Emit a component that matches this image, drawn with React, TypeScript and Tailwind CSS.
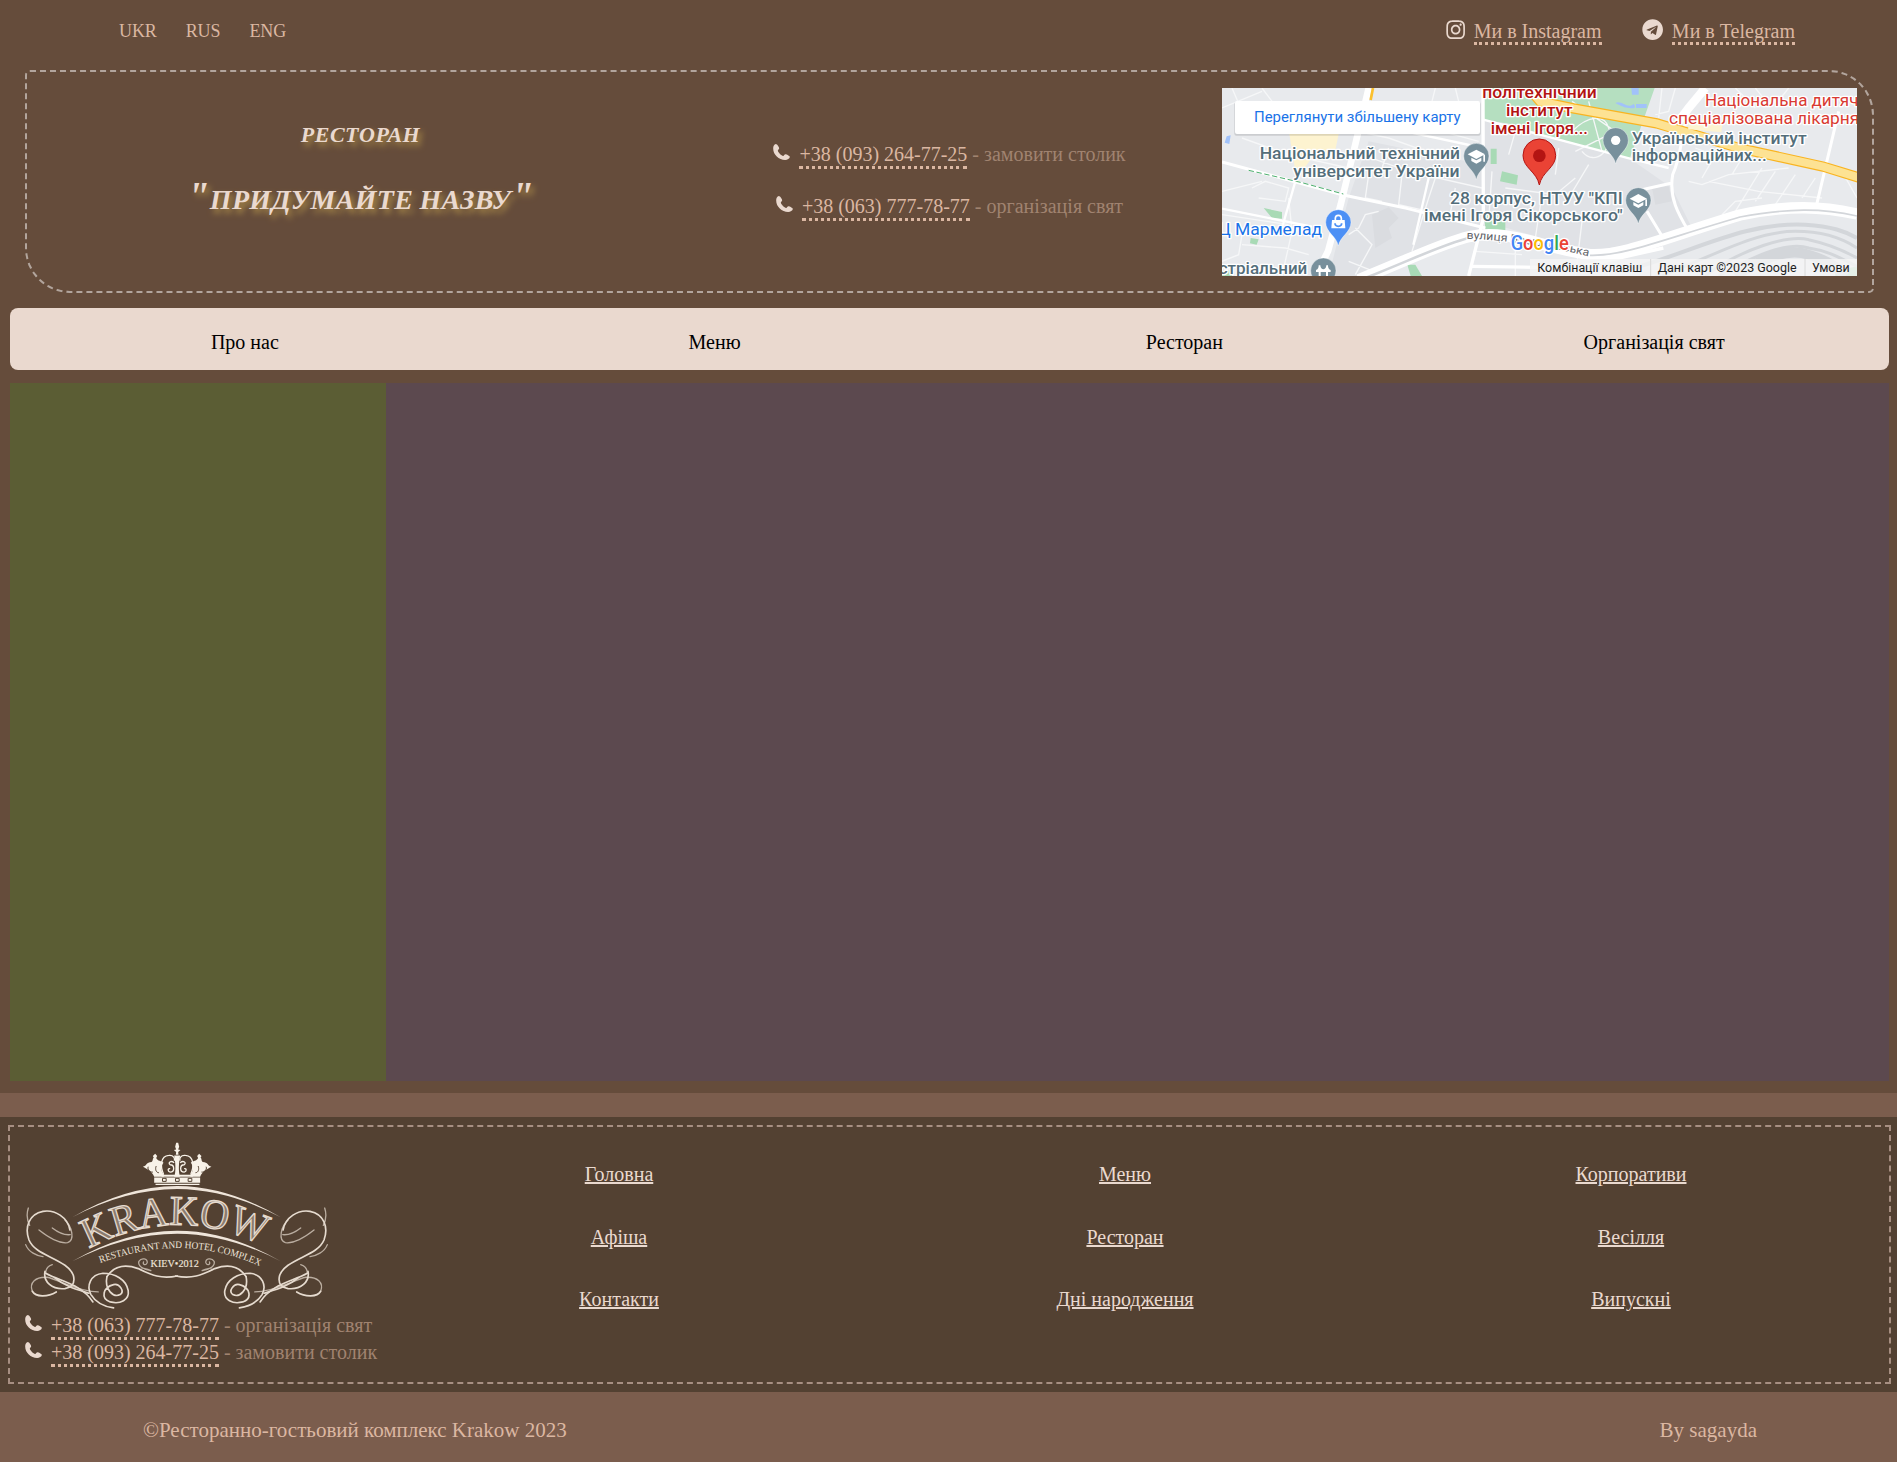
import React from "react";
import { FaInstagram, FaTelegram } from "react-icons/fa";

const serif = "font-['Liberation_Serif',serif]";

function PhoneIcon() {
  return (
    <svg viewBox="0 0 50 48" className="mt-[3px] mr-[9px] h-4 w-[17px] shrink-0 fill-[#ead9cf]">
      <path d="M8 0C3 1 0 6 0 13C0 33 17 48 36 48C43 48 49 44 50 39C50 36 40 31 37 31C34 31 32 36 30 36C25 35 15 25 14 20C14 18 18 16 18 13C18 9 12 0 8 0Z" />
    </svg>
  );
}

function PhoneLine({ number, note }: { number: string; note: string }) {
  return (
    <div className="flex items-start whitespace-nowrap text-xl leading-[27px]">
      <PhoneIcon />
      <span>
        <a className="border-b-3 border-dotted border-[#dbb7a2] pb-px text-[#dbb7a2]">{number}</a>
        <span className="text-[#a08370]"> - {note}</span>
      </span>
    </div>
  );
}

type LabelProps = {
  x: number;
  y: number;
  w?: number;
  end?: boolean;
  color: string;
  weight?: number;
  size?: number;
  halo?: boolean;
  children: React.ReactNode;
};

function Label({ x, y, w, end, color, weight = 500, size = 48, halo = true, children }: LabelProps) {
  return (
    <text
      x={x}
      y={y}
      fill={color}
      fontSize={size}
      fontWeight={weight}
      textAnchor={end ? "end" : "start"}
      textLength={w}
      lengthAdjust="spacingAndGlyphs"
      stroke={halo ? "#ffffff" : "none"}
      strokeWidth={halo ? 8 : 0}
      strokeLinejoin="round"
      paintOrder="stroke"
    >
      {children}
    </text>
  );
}

function Pin({ x, y, color, children }: { x: number; y: number; color: string; children?: React.ReactNode }) {
  return (
    <g transform={`translate(${x} ${y})`}>
      <path d="M0 71C-5 42-38 30-38 0A38 38 0 0 1 38 0C38 30 5 42 0 71Z" fill={color} stroke="#fff" strokeOpacity=".6" strokeWidth="2" />
      {children}
    </g>
  );
}

function Cap() {
  return (
    <g fill="#fff">
      <path d="M-26-5 0-19 26-5 0 9Z" />
      <path d="M-15 5V15L0 23 15 15V5L0 13Z" />
      <path d="M21-3H26V17H21Z" />
    </g>
  );
}

function CityMap() {
  return (
    <svg viewBox="0 0 1905 564" className="block h-[188px] w-[635px] font-[Roboto,sans-serif]">
      <rect width="1905" height="564" fill="#e8eaed" />
      <path d="M440 160 784 230V440L400 564H320L380 330ZM784 90 1224 212 1350 300 1420 440 1100 490 784 400Z" fill="#e0e2e6" />
      <path d="M450 380 500 358 530 390 500 420 510 450 460 480ZM1290 300 1340 295 1350 340 1300 350Z" fill="#dadce0" />
      <path d="M202 138H350L338 196H280L240 250H220Z" fill="#fdf3d0" />
      <path d="M780 0H1298L1224 210 1144 190 954 138 880 110 782 95Z" fill="#b5dfc0" />
      <path d="M806 182H824V228H806ZM840 250 888 262 884 290 834 280ZM786 370 850 385 850 430 790 425ZM125 360 180 372 180 392 150 390ZM86 450 110 454 104 470 84 466ZM556 530H580L600 564H566ZM0 550 30 545V564H0ZM1840 550 1905 535V564H1840Z" fill="#a8dab5" />
      <path d="M1180 45C1200 35 1215 65 1235 48C1245 60 1235 62 1222 60C1205 60 1190 50 1180 45ZM1228 0H1250V20H1230ZM1242 48H1274V60H1242ZM14 145 26 142 22 168 8 164Z" fill="#a1c2fa" />
      <g fill="none" stroke="#f6f7f8" strokeWidth="4">
        <path d="M0 60 120 10M30 0 60 70 130 60M120 0 150 40 250 100M60 150 200 200 380 240M200 330 210 430 180 564M90 300 130 280 200 300 190 340 110 330M0 310 120 280M0 380 200 410M60 470 190 480 260 500M60 440 50 500 0 520M360 120 500 150 640 200M420 200 560 250 780 300M440 260 430 330 480 340M380 440 410 420 430 380 470 370M540 260 530 350 620 370M570 490 620 330 640 270M660 130 770 160M640 0 630 40M700 0 710 40M380 520 480 560M400 560 450 470 400 420M700 300 680 400M500 180 480 240M810 250 800 400M850 300 1000 320 1060 270M880 130 860 200M960 320 940 450M1010 180 1000 260M1100 230 1040 330M1080 400 1060 564M760 490 900 500M880 460V564M1160 564 1150 500M1050 130C1100 80 1150 80 1160 120C1180 180 1120 240 1080 190M1050 40 1180 130 1060 190M1100 40 1140 190M1320 0 1310 90M1360 0 1340 70 1300 80M1400 280 1440 290 1520 260 1700 240M1460 280 1610 310 1800 330M1480 200 1440 270M1560 210 1530 260M1620 240 1540 370M1660 250 1600 340M1720 260 1660 350M1780 270 1740 330M1500 380 1540 340 1620 330M1540 0 1600 60M1600 0 1640 50M1700 0 1660 50M1860 250 1905 330M1420 180 1500 210M1560 170 1600 190" />
      </g>
      <g fill="none" stroke="#fff" strokeLinejoin="round">
        <path d="M0 222 144 261 364 321 554 361 790 420" strokeWidth="9" />
        <path d="M0 362 90 380 270 416" strokeWidth="7" />
        <path d="M220 280 180 420" strokeWidth="7" />
        <path d="M372 118 550 130 784 180M620 270 574 470" strokeWidth="7" />
        <path d="M783 0 784 390 740 564" strokeWidth="10" />
        <path d="M784 95 954 140 1224 212 1340 240" strokeWidth="7" />
        <path d="M1440 0C1370 90 1390 180 1352 260C1340 330 1370 380 1400 430M1240 310 1350 285M1275 370 1324 451M1850 70 1784 350" strokeWidth="9" />
        <path d="M1450 0 1400 60 1370 100" strokeWidth="26" />
        <path d="M440 0 395 190 356 350 318 490 280 564" strokeWidth="20" />
        <path d="M410 575C560 515 660 465 740 446C860 420 960 480 1104 500C1204 505 1320 451 1554 381C1700 350 1800 355 1905 378" strokeWidth="34" />
        <path d="M750 535 1060 540 1324 480" strokeWidth="10" />
      </g>
      <g fill="none" stroke="#d3d6da">
        <path d="M430 570C570 515 660 470 740 450" strokeWidth="8" />
        <path d="M1104 502C1204 505 1320 455 1554 387C1700 360 1800 360 1905 384" strokeWidth="5" />
        <path d="M1200 550C1400 500 1560 400 1750 410C1830 415 1870 430 1905 450" strokeWidth="12" />
        <path d="M1320 564C1480 500 1600 430 1720 430C1800 430 1860 450 1905 480M1450 564C1560 480 1700 440 1760 455C1830 470 1870 490 1905 510M1490 564C1600 500 1700 460 1760 480C1830 490 1870 520 1905 535" strokeWidth="9" />
        <path d="M1540 564C1620 510 1700 480 1760 500C1810 515 1850 540 1870 564" strokeWidth="30" />
      </g>
      <path d="M80 247 240 284 364 318" fill="none" stroke="#4caf6d" strokeWidth="3" strokeDasharray="16 8" />
      <g fill="none">
        <path d="M915-6 954 40 1054 61 1304 106 1554 181 1804 236 1915 270" stroke="#f9b421" strokeWidth="31" />
        <path d="M915-6 954 40 1054 61 1304 106 1554 181 1804 236 1915 270" stroke="#fde293" strokeWidth="24" />
        <path d="M1400 106 1500 115" stroke="#fdf3d0" strokeWidth="36" />
        <path d="M453 0 446 36" stroke="#fbc02d" strokeWidth="8" />
      </g>

      <Pin x={763} y={204} color="#78909c"><Cap /></Pin>
      <Pin x={1181} y={157} color="#78909c"><circle r="14" fill="#fff" /></Pin>
      <Pin x={1249} y={337} color="#78909c"><Cap /></Pin>
      <Pin x={349} y={403} color="#4d90f5">
        <path d="M-19-7H19L21 18H-21Z" fill="#fff" />
        <path d="M-9-6V-12A9 9 0 0 1 9-12V-6" fill="none" stroke="#fff" strokeWidth="5" />
        <path d="M-10 3A10 9 0 0 0 10 3" fill="none" stroke="#4d90f5" strokeWidth="5" />
      </Pin>
      <Pin x={304} y={548} color="#78909c">
        <path d="M-22 4V-2C-15-4-14-10-14-16H-9C-9-8-4-4 0-4S9-8 9-16H14C14-10 15-4 22-2V4H14V16H8V4H-8V16H-14V4Z" fill="#fff" />
      </Pin>

      <Label x={714} y={213} w={601} end color="#546e7a">Національний технічний</Label>
      <Label x={713} y={266} w={499} end color="#546e7a">університет України</Label>
      <Label x={1202} y={347} w={518} end color="#546e7a">28 корпус, НТУУ "КПІ</Label>
      <Label x={1202} y={400} w={596} end color="#546e7a">імені Ігоря Сікорського"</Label>
      <Label x={1229} y={168} w={525} color="#546e7a">Український інститут</Label>
      <Label x={1229} y={219} w={405} color="#546e7a">інформаційних...</Label>
      <Label x={781} y={31} w={343} color="#b31412">політехнічний</Label>
      <Label x={852} y={84} w={199} color="#b31412">інститут</Label>
      <Label x={806} y={137} w={292} color="#b31412">імені Ігоря...</Label>
      <Label x={1449} y={54} w={488} color="#d93a32" weight={400}>Національна дитяча</Label>
      <Label x={1341} y={107} w={571} color="#d93a32" weight={400}>спеціалізована лікарня</Label>
      <Label x={300} y={441} w={312} end color="#1a73e8" weight={400}>Ц Мармелад</Label>
      <Label x={256} y={559} w={266} end color="#546e7a">стріальний</Label>

      <path id="street" d="M734 452C840 456 960 470 1104 506" fill="none" />
      <text fontSize="33" fill="#5f6368" stroke="#fff" strokeWidth="6" paintOrder="stroke">
        <textPath href="#street" textLength="370" lengthAdjust="spacingAndGlyphs">вулиця Борщагівська</textPath>
      </text>

      <path d="M952 291C944 250 903 240 903 202A49 49 0 0 1 1001 202C1001 240 960 250 952 291Z" fill="#ea4335" stroke="#b31412" strokeWidth="3" />
      <circle cx="952" cy="203" r="19" fill="#b31412" />

      <text x="866" y="487" fontSize="58" fontWeight="500" textLength="174" lengthAdjust="spacingAndGlyphs" stroke="#fff" strokeWidth="8" paintOrder="stroke">
        <tspan fill="#4285f4">G</tspan><tspan fill="#ea4335">o</tspan><tspan fill="#fbbc04">o</tspan><tspan fill="#4285f4">g</tspan><tspan fill="#34a853">l</tspan><tspan fill="#ea4335">e</tspan>
      </text>

      <rect x="924" y="513" width="981" height="51" fill="#f5f5f5" fillOpacity=".8" />
      <path d="M1286 513V564M1749 513V564" stroke="#dadada" strokeWidth="3" />
      <Label x={946} y={552} w={315} color="#1f1f1f" weight={400} size={36} halo={false}>Комбінації клавіш</Label>
      <Label x={1307} y={552} w={417} color="#1f1f1f" weight={400} size={36} halo={false}>Дані карт ©2023 Google</Label>
      <Label x={1770} y={552} w={113} color="#1f1f1f" weight={400} size={36} halo={false}>Умови</Label>

      <rect x="37" y="42" width="739" height="101" rx="6" fill="#000" fillOpacity=".12" />
      <rect x="39" y="39" width="735" height="99" rx="6" fill="#fff" />
      <Label x={96} y={103} w={620} color="#1a73e8" weight={400} size={42} halo={false}>Переглянути збільшену карту</Label>
    </svg>
  );
}

function Flourish() {
  return (
    <g>
      <g strokeWidth="5">
        <path d="M165 300C158 262 120 238 84 244C42 252 28 292 42 330C58 368 110 378 150 406C186 432 186 470 150 476C112 480 84 456 90 424" />
        <path d="M92 430C140 456 198 462 234 516" />
        <path d="M120 444C150 470 190 480 222 490" />
        <path d="M52 484C62 502 98 502 124 486" />
        <path d="M276 440C300 404 336 404 370 416C410 436 440 448 487 438" />
        <path d="M276 440C268 480 296 504 316 494C330 484 314 460 296 464C264 472 256 506 286 516C316 524 344 510 340 482C334 448 300 430 264 430C226 434 214 468 228 494C244 520 268 530 296 534" />
      </g>
      <g strokeWidth="4" opacity=".7">
        <path d="M40 234C34 252 36 270 44 286M32 344C40 366 66 378 84 380" />
        <path d="M72 300C100 322 130 342 158 338C180 330 172 290 150 270M112 294C130 308 148 316 166 314" />
        <path d="M52 484C42 458 62 440 96 442C130 448 190 486 250 486" />
        <path d="M92 430C92 416 100 408 112 404" />
        <path d="M408 422C384 418 368 408 372 394C380 382 398 386 397 398C394 408 382 404 386 396M408 422C398 416 390 416 380 414" />
      </g>
    </g>
  );
}

function KrakowLogo() {
  return (
    <svg viewBox="30 30 910 510" className={`block h-[170px] w-[303px] ${serif}`}>
      <g fill="none" stroke="#e6dbcf" strokeLinecap="round">
        <Flourish />
        <g transform="translate(970 0) scale(-1 1)">
          <Flourish />
        </g>
      </g>
      <g fill="#efe5da">
        <path d="M172 262Q330 169 487 168Q640 169 798 262Q640 178 487 177Q330 178 172 262Z" />
        <path d="M172 394Q330 302 487 302Q640 302 798 394Q640 312 487 311Q330 312 172 394Z" />
      </g>

      <g fill="#f8f2e8">
        <path d="M418 142H556V158H418ZM422 161H554V165H422Z" />
        <path d="M484 38H490L493 50 490 58 497 60 490 66 491 74H483L484 66 477 60 484 58 481 50Z" />
        <path d="M418 140C412 124 396 116 384 110C396 108 394 96 410 96C416 92 412 84 417 84L414 78 421 71 427 78 424 84C428 94 440 92 446 98C438 108 438 124 446 132C450 136 450 140 444 140Z" />
        <path d="M556 140C562 124 578 116 590 110C578 108 580 96 564 96C558 92 562 84 557 84L560 78 553 71 547 78 550 84C546 94 534 92 528 98C536 108 536 124 528 132C524 136 524 140 530 140Z" />
        <path d="M478 140C484 124 482 96 478 76H496C492 96 490 124 496 140Z" />
        <path d="M440 140V134H534V140Z" />
      </g>
      <g fill="none" stroke="#f8f2e8" strokeWidth="4">
        <path d="M446 132C436 110 436 78 462 76C476 74 482 86 478 92M528 132C538 110 538 78 512 76C498 74 492 86 496 92" />
        <path d="M478 98C468 90 458 98 466 104C480 104 480 126 466 126C458 124 458 114 466 116M496 98C506 90 516 98 508 104C494 104 494 126 508 126C516 124 516 114 508 116" />
      </g>
      <g fill="none" stroke="#534132" strokeWidth="3">
        <path d="M443 145H454V154H443ZM482 145H493V154H482ZM520 145H531V154H520Z" />
        <path d="M400 110C396 120 408 128 414 126M574 110C578 120 566 128 560 126M424 108C420 118 424 128 432 128M550 108C554 118 550 128 542 128" />
      </g>

      <path id="nameArc" d="M222 356Q350 286 490 285Q630 286 752 350" fill="none" />
      <text fontSize="126" fill="#8a7b6e" stroke="#e6dbcf" strokeWidth="4">
        <textPath href="#nameArc" textLength="540" lengthAdjust="spacingAndGlyphs">KRAKOW</textPath>
      </text>
      <path id="mottoArc" d="M256 399Q380 354 492 354Q620 356 738 410" fill="none" />
      <text fontSize="30" fill="#efe5da">
        <textPath href="#mottoArc" textLength="492" lengthAdjust="spacingAndGlyphs">RESTAURANT AND HOTEL COMPLEX</textPath>
      </text>
      <text x="407" y="411" fontSize="34" fill="#efe5da" stroke="#efe5da" strokeWidth=".5" textLength="145" lengthAdjust="spacingAndGlyphs">KIEV•2012</text>
    </svg>
  );
}

const navItems = ["Про нас", "Меню", "Ресторан", "Організація свят"];
const footerColumns = [
  ["Головна", "Афіша", "Контакти"],
  ["Меню", "Ресторан", "Дні народження"],
  ["Корпоративи", "Весілля", "Випускні"],
];

const titleShadow = "[text-shadow:3px_4px_6px_#b0904a]";

export default function App() {
  return (
    <div className={`h-[1462px] w-full overflow-hidden bg-[#7b5d4d] ${serif}`}>
      <div className="h-[1093px] bg-[#654c3b] pr-2 pl-[10px]">
        <div className="flex h-[70px] items-start justify-between pr-[94px] pl-[109px]">
          <div className="flex gap-[29px] pt-[18px] text-lg leading-[26px] tracking-[-0.1px] text-[#dbb7a2]">
            <span>UKR</span>
            <span>RUS</span>
            <span>ENG</span>
          </div>
          <div className="flex gap-10 pt-[18px] text-xl leading-[27px] text-[#dbb7a2]">
            <span className="flex">
              <FaInstagram className="mt-px mr-[7px] size-[21.3px] text-[#ead9cf]" />
              <span><a className="border-b-3 border-dotted border-[#dbb7a2]">Ми в Instagram</a></span>
            </span>
            <span className="flex">
              <FaTelegram className="mt-px mr-[9px] size-[21.3px] text-[#ead9cf]" />
              <span><a className="border-b-3 border-dotted border-[#dbb7a2]">Ми в Telegram</a></span>
            </span>
          </div>
        </div>

        <header className="mx-[15px] flex h-[223px] rounded-[5px_45px_5px_45px] border-2 border-dashed border-[#b2a59d] px-[15px] pt-4">
          <div className="w-[635px] text-center font-bold italic text-[#ead9cf] [font-variant:small-caps]">
            <div className={`mt-[23px] pl-[2px] text-[32px] leading-[40px] tracking-[0.5px] ${titleShadow}`}>ресторан</div>
            <div className={`mt-[15px] pl-[2px] text-[40px] leading-[60px] tracking-[0.3px] [word-spacing:-4px] ${titleShadow}`}>"придумайте назву"</div>
          </div>
          <div className="flex flex-1 flex-col items-center gap-[25px] pt-[53px]">
            <PhoneLine number="+38 (093) 264-77-25" note="замовити столик" />
            <PhoneLine number="+38 (063) 777-78-77" note="організація свят" />
          </div>
          <CityMap />
        </header>

        <nav className="mt-[15px] grid h-[62px] grid-cols-4 rounded-lg bg-[#ead9cf] pt-[23px] text-center text-xl leading-[23px] text-black">
          {navItems.map((item) => (
            <a key={item}>{item}</a>
          ))}
        </nav>

        <main className="mt-[13px] flex h-[698px]">
          <div className="w-[376px] bg-[#5b5d34]" />
          <div className="flex-1 bg-[#5c494f]" />
        </main>
      </div>

      <footer className="mt-6 h-[275px] bg-[#534132] px-2 pt-2">
        <div className="flex h-[259px] w-[1883px] border-2 border-dashed border-[#a78f82]">
          <div className="w-[356px] shrink-0 pt-[13px] pl-[15px]">
            <KrakowLogo />
            <div className="pt-[2px]">
              <PhoneLine number="+38 (063) 777-78-77" note="організація свят" />
              <PhoneLine number="+38 (093) 264-77-25" note="замовити столик" />
            </div>
          </div>
          <div className="grid w-[1518px] shrink-0 grid-cols-3 pt-[36px]">
            {footerColumns.map((column) => (
              <div key={column[0]} className="flex flex-col items-center gap-[39.5px] text-xl leading-[23px] text-[#ead9cf]">
                {column.map((link) => (
                  <a key={link} className="underline decoration-2 underline-offset-[1px]">{link}</a>
                ))}
              </div>
            ))}
          </div>
        </div>
      </footer>

      <div className="flex h-[70px] items-start justify-between pt-[26px] pr-[140px] pl-[143px] text-[21px] leading-6 text-[#dbb7a2]">
        <span>©Ресторанно-гостьовий комплекс Krakow 2023</span>
        <span>By sagayda</span>
      </div>
    </div>
  );
}
